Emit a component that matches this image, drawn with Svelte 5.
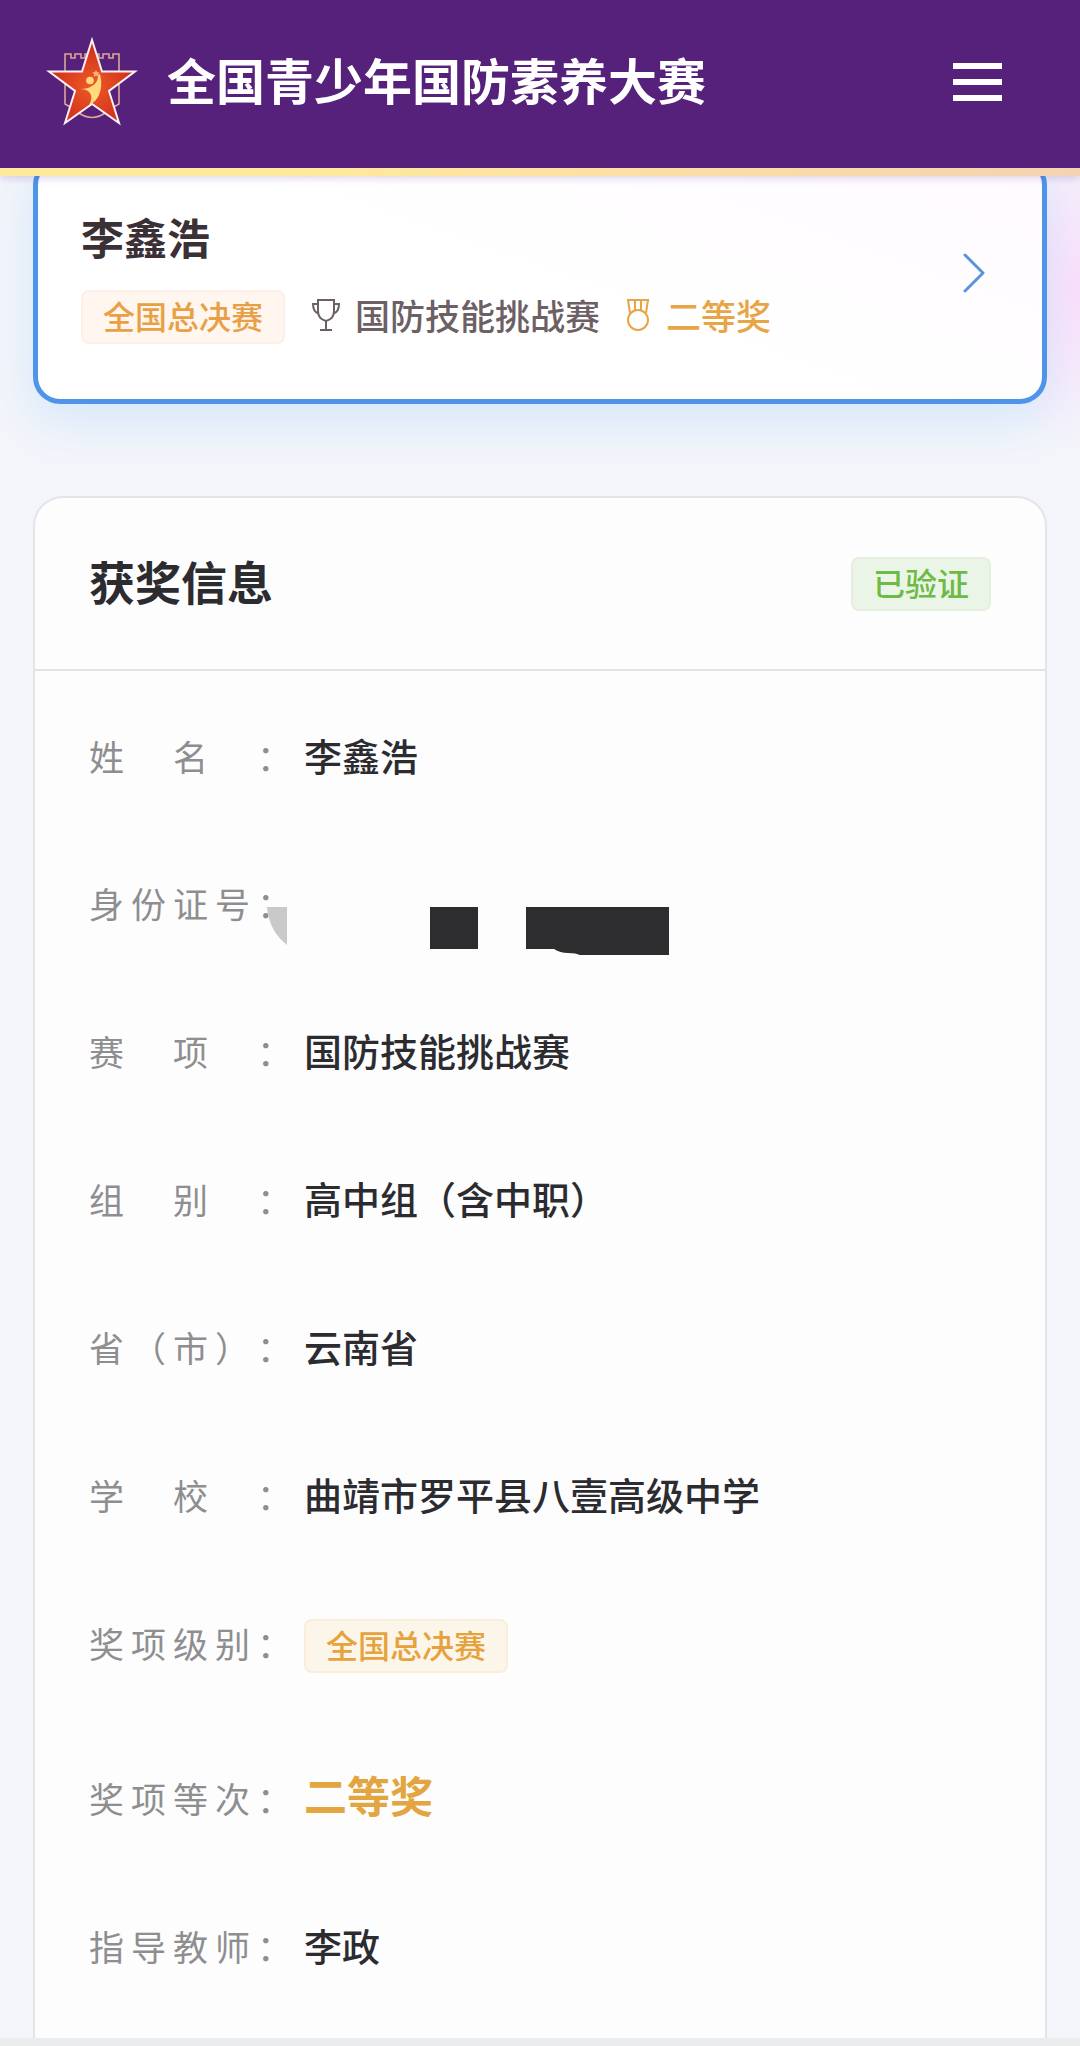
<script>
  const rows = [
    { label: '姓　名　：', value: '李鑫浩' },
    { label: '身份证号：', kind: 'masked' },
    { label: '赛　项　：', value: '国防技能挑战赛' },
    { label: '组　别　：', value: '高中组（含中职）' },
    { label: '省（市）：', value: '云南省' },
    { label: '学　校　：', value: '曲靖市罗平县八壹高级中学' },
    { label: '奖项级别：', value: '全国总决赛', kind: 'tag' },
    { label: '奖项等次：', value: '二等奖', kind: 'prize' },
    { label: '指导教师：', value: '李政' },
  ];
</script>

<div class="page">
  <header class="topbar">
    <svg class="logo" viewBox="0 0 94 90" aria-hidden="true">
      <defs>
        <radialGradient id="star" cx="0.5" cy="0.55" r="0.5">
          <stop offset="0" stop-color="#ee5a26" />
          <stop offset="1" stop-color="#cf2f1b" />
        </radialGradient>
      </defs>
      <path
        d="M20 17h6v4h4v-4h6v4h4v-4h14v4h4v-4h6v4h4v-4h6v50q-8 4-14 9-13 9-26 0-6-5-14-9z"
        fill="none" stroke="#dba795" stroke-width="1.6"
      />
      <path
        d="M47 3 57 34.500 90 34.500 64 54 74 86 47 67 20 86 30 54 4 34.500 37 34.500z"
        fill="url(#star)" stroke="#fdf0f4" stroke-width="2"
      />
      <circle cx="45" cy="43.500" r="3.800" fill="#ffd97c" />
      <path d="M35 52q8 0 12-3 6-3 6-11l2-1q3 12-1 21-3 7-10 10 4-7 1-12-3-4-10-4z" fill="#ffd97c" />
      <path d="m51 33 1.200 2.300 2.600.2-1.900 1.800.6 2.500-2.500-1.200-2.300 1.300.5-2.600-1.900-1.800 2.600-.4z" fill="#ffae7c" />
    </svg>
    <h1>全国青少年国防素养大赛</h1>
    <button class="menu" aria-label="菜单"><span></span><span></span><span></span></button>
  </header>

  <main>
    <button class="record">
      <span class="summary">
        <strong>李鑫浩</strong>
        <span class="meta">
          <span class="tag peach">全国总决赛</span>
          <span class="item">
            <svg class="trophy" viewBox="0 0 30 34" fill="none" stroke="currentColor" stroke-width="2" aria-hidden="true">
              <path d="M7 2h16v11q0 8-8 10-8-2-8-10zM15 23v9M9 32h12M7 6H2q0 8 6 10M23 6h5q0 8-6 10" />
            </svg>
            国防技能挑战赛
          </span>
          <span class="item gold">
            <svg class="medal" viewBox="0 0 24 34" fill="none" stroke="currentColor" stroke-width="2" aria-hidden="true">
              <circle cx="12" cy="22" r="10" />
              <path d="M4 15 2 2h20l-2 13M9 2v10M15 2v10" />
            </svg>
            二等奖
          </span>
        </span>
      </span>
      <svg class="chevron" viewBox="0 0 23 40" fill="none" stroke="#5b94dc" stroke-width="3" stroke-linecap="round" stroke-linejoin="round" aria-hidden="true">
        <path d="m2 2 18 18L2 38" />
      </svg>
    </button>

    <section class="info">
      <div class="head">
        <h2>获奖信息</h2>
        <span class="tag green">已验证</span>
      </div>
      <dl>
        {#each rows as row}
          <div class="row">
            <dt>{row.label}</dt>
            {#if row.kind === 'masked'}
              <dd>
                <svg class="mask" viewBox="0 0 402 48" role="img" aria-label="已遮挡">
                  <path d="M0 0h20v38Q2 24 0 0z" fill="#c9c9ca" />
                  <path d="M163 0h48v42h-48zM259 0h143v48h-89q-4-2-12-2-8 0-14-4h-28z" fill="#2d2d2f" />
                </svg>
              </dd>
            {:else if row.kind === 'tag'}
              <dd><span class="tag amber">{row.value}</span></dd>
            {:else}
              <dd class={row.kind}>{row.value}</dd>
            {/if}
          </div>
        {/each}
      </dl>
    </section>
  </main>
  <footer></footer>
</div>

<style>
  :global(body) {
    margin: 0;
    background: #f3f5fa;
  }
  .page {
    display: flex;
    flex-direction: column;
    min-height: 100vh;
    overflow: hidden;
    font-family: 'Noto Sans CJK SC', 'Noto Sans', sans-serif;
    color: #2c2c30;
  }
  .topbar {
    position: relative;
    z-index: 1;
    display: flex;
    align-items: center;
    height: 164px;
    padding: 0 78px 4px 45px;
    background: #56217a;
    border-bottom: 8px solid;
    border-image: linear-gradient(90deg, #ffe99c 30%, #f3d3b2) 1;
    box-shadow: 0 2px 8px rgba(86, 33, 122, 0.2);
  }
  .logo {
    width: 94px;
    height: 90px;
  }
  h1 {
    flex: 1;
    margin: 0 0 0 28px;
    padding-bottom: 6px;
    font-size: 49px;
    line-height: 72px;
    font-weight: 700;
    color: #fff;
    white-space: nowrap;
  }
  button {
    border: 0;
    padding: 0;
    background: none;
    font: inherit;
    color: inherit;
    text-align: left;
    cursor: pointer;
  }
  .menu {
    display: grid;
    gap: 10px;
    width: 49px;
  }
  .menu span {
    height: 6px;
    background: #fff;
  }
  main {
    flex: 1;
    display: flex;
    flex-direction: column;
    gap: 92px;
    margin-top: -18px;
    padding: 0 33px;
    background: radial-gradient(ellipse at 100% 45%, #fbdffb, rgba(251, 227, 251, 0) 70%) right top / 120px 290px no-repeat;
  }
  .record {
    display: flex;
    align-items: center;
    justify-content: space-between;
    padding: 42px 56px 55px 43px;
    background: linear-gradient(200deg, #fffaff, #fff 50%);
    border: 5px solid #4e95ea;
    border-radius: 27px;
    box-shadow: 0 16px 48px rgba(64, 158, 255, 0.16);
  }
  .summary {
    display: grid;
    gap: 23px;
  }
  strong {
    font-size: 43px;
    line-height: 62px;
    font-weight: 700;
    color: #3a3036;
  }
  .meta {
    display: flex;
    align-items: center;
    gap: 26px;
  }
  .item {
    display: flex;
    align-items: center;
    gap: 14px;
    padding-bottom: 4px;
    font-size: 35px;
    line-height: 50px;
    font-weight: 500;
    color: #6c6065;
  }
  .gold {
    gap: 16px;
    color: #e8a545;
  }
  .trophy {
    width: 30px;
    height: 34px;
  }
  .medal {
    width: 24px;
    height: 34px;
  }
  .chevron {
    width: 23px;
    height: 40px;
    margin-bottom: 4px;
  }
  .tag {
    display: inline-block;
    padding: 0 20px 4px;
    border: 2px solid;
    border-radius: 8px;
    font-size: 32px;
    line-height: 46px;
    font-weight: 500;
    white-space: nowrap;
  }
  .peach {
    color: #e9a045;
    background: #fff6ef;
    border-color: #feeee8;
  }
  .amber {
    color: #e6a23c;
    background: #fcf6ea;
    border-color: #faeeda;
  }
  .green {
    color: #6dbb45;
    background: #ebf5e7;
    border-color: #e4eddf;
  }
  .info {
    flex: 1;
    background: #fdfdfe;
    border: 2px solid #e4e5e9;
    border-bottom: 0;
    border-radius: 30px 30px 0 0;
  }
  .head {
    display: flex;
    align-items: center;
    justify-content: space-between;
    padding: 50px 54px 50px 54px;
    border-bottom: 2px solid #e2e3e6;
  }
  h2 {
    margin: 0;
    padding-bottom: 6px;
    font-size: 46px;
    line-height: 65px;
    font-weight: 700;
  }
  dl {
    margin: 0;
    padding: 10px 54px 8px;
  }
  .row {
    position: relative;
    display: flex;
    align-items: baseline;
    padding: 44px 0 43px;
  }
  dt {
    flex: none;
    width: 215px;
    font-size: 35px;
    line-height: 60px;
    letter-spacing: 7px;
    text-spacing-trim: space-all;
    white-space: nowrap;
    color: #8e8e90;
  }
  dd {
    margin: 0;
    font-size: 38px;
    line-height: 60px;
    font-weight: 500;
  }
  .prize {
    font-size: 43px;
    line-height: 68px;
    font-weight: 700;
    color: #e3a540;
  }
  .mask {
    position: absolute;
    left: 178px;
    top: 78px;
    width: 402px;
    height: 48px;
  }
  footer {
    height: 8px;
    background: #eaecee;
  }
</style>
